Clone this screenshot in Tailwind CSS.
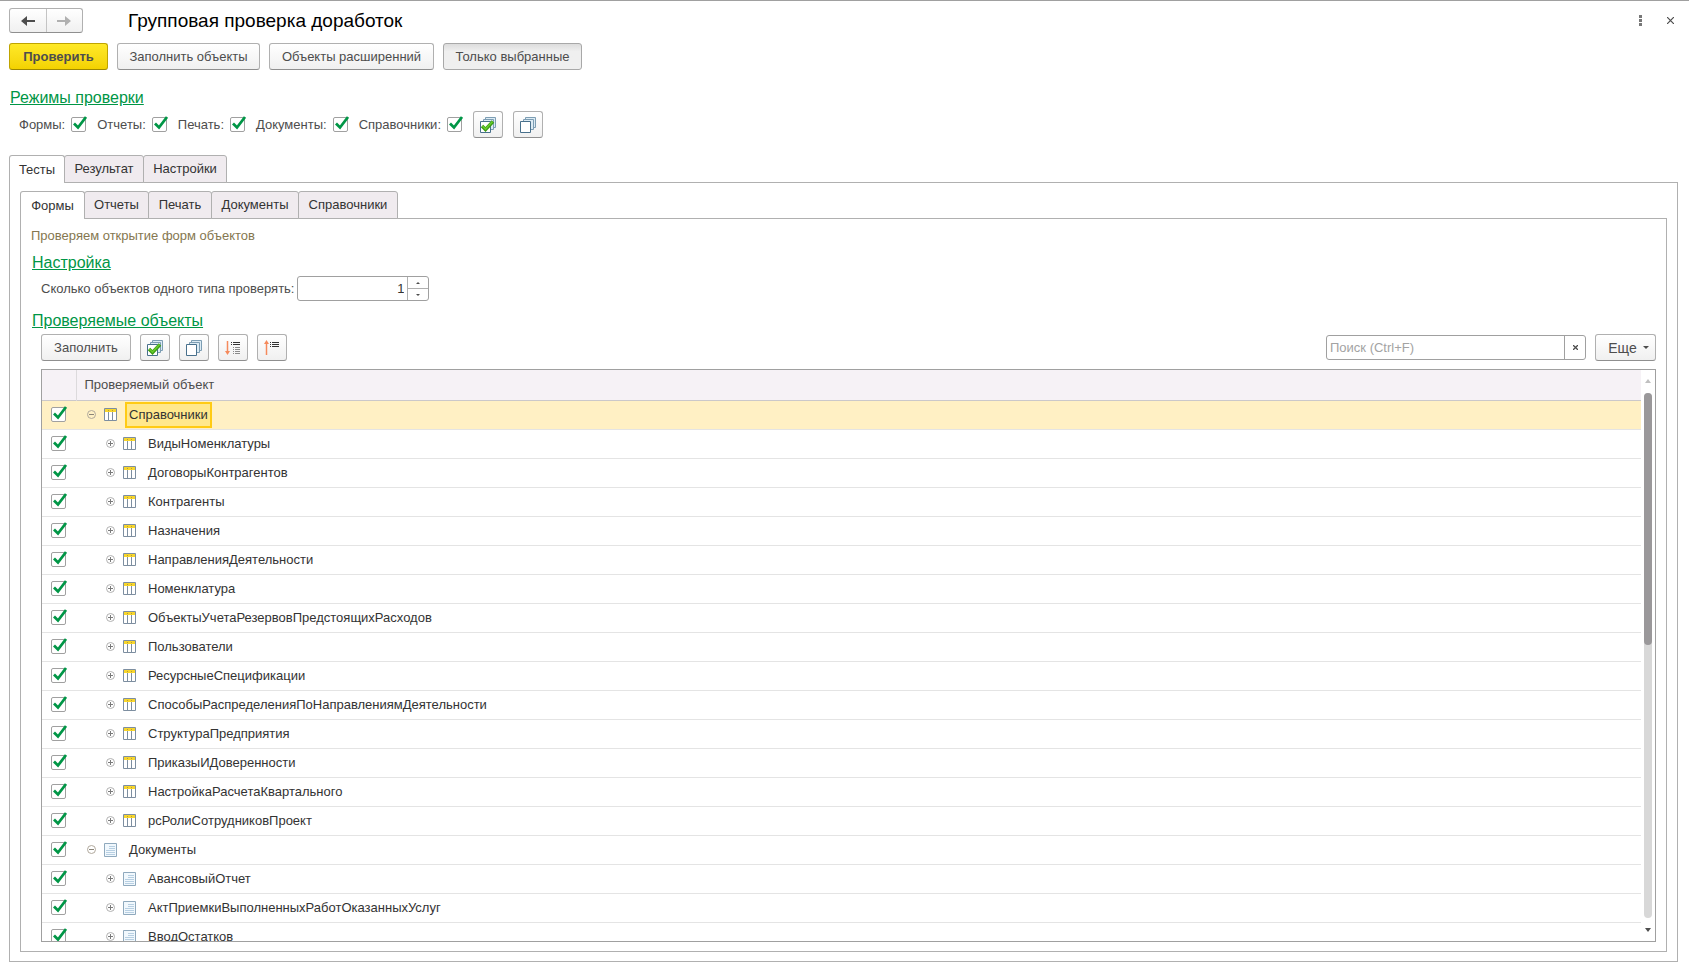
<!DOCTYPE html>
<html lang="ru">
<head>
<meta charset="utf-8">
<title>Групповая проверка доработок</title>
<script src="https://cdn.jsdelivr.net/npm/@tailwindcss/browser@4"></script>
</head>
<body class="flex h-screen flex-col overflow-hidden border-t border-[#a0a0a0] bg-white px-[9px] pb-[3px] font-['Liberation_Sans',Arial,sans-serif] text-[13px] leading-4 text-[#4d4d4d]">

<svg class="hidden" aria-hidden="true">
  <symbol id="tick" viewBox="0 0 17 16"><path d="M3 8.5 7 12.5 15 2" fill="none" stroke="#009646" stroke-width="2.8"/></symbol>
  <symbol id="stack" viewBox="0 0 16 16"><g stroke="#7c9db3" fill="#dcebf4"><path d="M5.500.500h10v10h-10z"/><path d="M3.500 2.500h10v10h-10z"/></g><path d="M.500 4.500h10v11h-10z" fill="#fff" stroke="#48708c"/></symbol>
  <symbol id="stack-on" viewBox="0 0 16 16"><g stroke="#7c9db3" fill="#dcebf4"><path d="M5.500.500h10v10h-10z"/><path d="M3.500 2.500h10v10h-10z"/></g><path d="M.500 4.500h10v11h-10z" fill="#fff" stroke="#48708c"/><path d="M2 9 5.500 12.500 13 4.500" fill="none" stroke="#3c9a14" stroke-width="3.400"/><path d="M2.500 9 5.500 12 12.500 4.500" fill="none" stroke="#66cc2a" stroke-width="1.600"/></symbol>
  <symbol id="plus" viewBox="0 0 9 9"><circle cx="4.500" cy="4.500" r="4" fill="#fff" stroke="#b0b0b0"/><path d="M2 4.500h5M4.500 2v5" stroke="#7a7a7a"/></symbol>
  <symbol id="minus" viewBox="0 0 9 9"><circle cx="4.500" cy="4.500" r="4" fill="none" stroke="#b0a89c"/><path d="M2 4.500h5" stroke="#8a8478"/></symbol>
  <symbol id="catalog" viewBox="0 0 13 13"><path d="M.500.500h12v12H.500z" fill="#fff" stroke="#7d8ea0"/><path d="M4.500 3v9M8.500 3v9" stroke="#7d8ea0"/><path d="M1 1h11v3H1z" fill="#f8d62c"/><path d="M4.500 2v1M8.500 2v1" stroke="#b09a40"/></symbol>
  <symbol id="doc" viewBox="0 0 13 14"><path d="M.500.500h12v13H.500z" fill="#f1f8fd" stroke="#8fa9bd"/><path d="M5 3.500h6M5 5.500h6M2 7.500h9M2 9.500h9M2 11.500h9" stroke="#b7cfe2"/></symbol>
</svg>

<header class="flex h-[37px] shrink-0 items-center pt-[2px]">
  <div class="flex h-[25px] w-[74px] rounded-[3px] border border-[#b0b0b0] border-b-[#8f8f8f] bg-linear-to-b from-white to-[#f0f0f0]">
    <button aria-label="Назад" class="grid flex-1 place-items-center border-r border-[#c4c4c4]"><svg class="h-[10px] w-[14px]" viewBox="0 0 14 10"><path d="M0 5 6 0v4h8v2H6v4z" fill="#4d4d4d"/></svg></button>
    <button aria-label="Вперед" class="grid flex-1 place-items-center"><svg class="h-[10px] w-[14px]" viewBox="0 0 14 10"><path d="M14 5 8 0v4H0v2h8v4z" fill="#b0b0b0"/></svg></button>
  </div>
  <h1 class="ml-[45px] text-[19px] leading-6 text-black">Групповая проверка доработок</h1>
  <div class="mr-[2px] ml-auto flex items-center gap-[14px]">
    <button aria-label="Меню" class="grid size-4 place-items-center"><svg class="h-[11px] w-[3px]" viewBox="0 0 3 11"><path d="M0 0h3v3H0zM0 4h3v3H0zM0 8h3v3H0z" fill="#777"/></svg></button>
    <button aria-label="Закрыть" class="grid size-4 place-items-center"><svg class="size-[7px]" viewBox="0 0 7 7"><path d="M0 0 7 7M7 0 0 7" stroke="#4d4d4d" stroke-width="1.2"/></svg></button>
  </div>
</header>

<div class="mt-[5px] flex h-[27px] shrink-0 gap-[9px]">
  <button class="w-[99px] rounded-[3px] border border-[#bfa400] border-b-[#9e8800] bg-linear-to-b from-[#ffe926] to-[#f3d200] font-bold">Проверить</button>
  <button class="w-[143px] rounded-[3px] border border-[#b0b0b0] border-b-[#8f8f8f] bg-linear-to-b from-white to-[#f0f0f0]">Заполнить объекты</button>
  <button class="w-[165px] rounded-[3px] border border-[#b0b0b0] border-b-[#8f8f8f] bg-linear-to-b from-white to-[#f0f0f0]">Объекты расширенний</button>
  <button aria-pressed="true" class="w-[139px] rounded-[3px] border border-[#a8a8a8] bg-linear-to-b from-[#dcdcdc] to-[#efefef] to-30%">Только выбранные</button>
</div>

<h2 class="mt-4 shrink-0 text-[16px] leading-6"><a href="#modes" class="ml-px text-[#009646] underline">Режимы проверки</a></h2>
<div id="modes" class="mt-px ml-[10px] flex h-[27px] shrink-0 items-center">
  <div class="flex items-center gap-[10px]" id="mode-list"></div>
  <button aria-label="Отметить все режимы" class="ml-[10px] grid h-[27px] w-[30px] place-items-center rounded-[3px] border border-[#b0b0b0] border-b-[#8f8f8f] bg-linear-to-b from-white to-[#f0f0f0]"><svg class="size-4"><use href="#stack-on"/></svg></button>
  <button aria-label="Снять отметки режимов" class="ml-[10px] grid h-[27px] w-[30px] place-items-center rounded-[3px] border border-[#b0b0b0] border-b-[#8f8f8f] bg-linear-to-b from-white to-[#f0f0f0]"><svg class="size-4"><use href="#stack"/></svg></button>
</div>

<div role="tablist" class="relative z-10 mt-[17px] -mb-px flex h-7 shrink-0 text-[#333]">
  <button role="tab" aria-selected="true" class="w-14 rounded-t-[3px] border border-b-0 border-[#b0b0b0] bg-white">Тесты</button>
  <button role="tab" class="-ml-px w-20 rounded-t-[3px] border border-[#b0b0b0] bg-[#f0ebef]">Результат</button>
  <button role="tab" class="-ml-px w-[84px] rounded-t-[3px] border border-[#b0b0b0] bg-[#f0ebef]">Настройки</button>
</div>
<main class="mr-[2px] flex min-h-0 flex-1 flex-col border border-[#b0b0b0] px-[10px] pt-2 pb-[9px]">
  <div role="tablist" class="relative z-10 -mb-px flex h-7 shrink-0 text-[#333]">
    <button role="tab" aria-selected="true" class="w-[65px] rounded-t-[3px] border border-b-0 border-[#b0b0b0] bg-white">Формы</button>
    <button role="tab" class="-ml-px w-[65px] rounded-t-[3px] border border-[#b0b0b0] bg-[#f0ebef]">Отчеты</button>
    <button role="tab" class="-ml-px w-16 rounded-t-[3px] border border-[#b0b0b0] bg-[#f0ebef]">Печать</button>
    <button role="tab" class="-ml-px w-[88px] rounded-t-[3px] border border-[#b0b0b0] bg-[#f0ebef]">Документы</button>
    <button role="tab" class="-ml-px w-[100px] rounded-t-[3px] border border-[#b0b0b0] bg-[#f0ebef]">Справочники</button>
  </div>
  <section class="flex min-h-0 flex-1 flex-col border border-[#b0b0b0] px-[10px] pt-[9px] pb-[9px]">
    <p class="shrink-0 text-[#857750]">Проверяем открытие форм объектов</p>
    <h2 class="mt-[7px] shrink-0 text-[16px] leading-6"><a href="#settings" class="ml-px text-[#009646] underline">Настройка</a></h2>
    <div id="settings" class="mt-[1px] ml-[10px] flex h-[25px] shrink-0 items-center">
      <label for="count">Сколько объектов одного типа проверять:</label>
      <div class="ml-[3px] flex h-[25px] w-[132px] overflow-hidden rounded-[3px] border border-[#a0a0a0]">
        <input id="count" type="text" value="1" class="min-w-0 flex-1 pr-[3px] text-right text-[#333] outline-none">
        <div class="flex w-[21px] flex-col border-l border-[#b0b0b0]">
          <button aria-label="Больше" class="grid flex-1 place-items-center border-b border-[#b0b0b0]"><svg class="h-[2px] w-[4px]" viewBox="0 0 4 2"><path d="M0 2 2 0 4 2z" fill="#4d4d4d"/></svg></button>
          <button aria-label="Меньше" class="grid flex-1 place-items-center"><svg class="h-[2px] w-[4px]" viewBox="0 0 4 2"><path d="M0 0 2 2 4 0z" fill="#4d4d4d"/></svg></button>
        </div>
      </div>
    </div>
    <h2 class="mt-2 shrink-0 text-[16px] leading-6"><a href="#objects" class="ml-px text-[#009646] underline">Проверяемые объекты</a></h2>
    <div class="mt-px ml-[10px] flex h-[27px] shrink-0 items-center gap-[9px]">
      <button class="h-full w-[90px] rounded-[3px] border border-[#b0b0b0] border-b-[#8f8f8f] bg-linear-to-b from-white to-[#f0f0f0]">Заполнить</button>
      <button aria-label="Отметить все" class="grid h-full w-[30px] place-items-center rounded-[3px] border border-[#b0b0b0] border-b-[#8f8f8f] bg-linear-to-b from-white to-[#f0f0f0]"><svg class="size-4"><use href="#stack-on"/></svg></button>
      <button aria-label="Снять отметки" class="grid h-full w-[30px] place-items-center rounded-[3px] border border-[#b0b0b0] border-b-[#8f8f8f] bg-linear-to-b from-white to-[#f0f0f0]"><svg class="size-4"><use href="#stack"/></svg></button>
      <button aria-label="Развернуть все" class="grid h-full w-[30px] place-items-center rounded-[3px] border border-[#b0b0b0] border-b-[#8f8f8f] bg-linear-to-b from-white to-[#f0f0f0]"><svg class="size-4" viewBox="0 0 16 16"><path d="M2.500 1v11" stroke="#f58a5c" stroke-width="1.500"/><path d="M0 11h5L2.500 15z" fill="#f58a5c"/><path d="M6 2.500h1M8 2.500h7M6 4.500h1M8 4.500h7" stroke="#333"/><path d="M8 7.500h1M10 7.500h5M8 9.500h1M10 9.500h5M8 11.500h1M10 11.500h5M8 13.500h1M10 13.500h5" stroke="#8a8a8a"/></svg></button>
      <button aria-label="Свернуть все" class="grid h-full w-[30px] place-items-center rounded-[3px] border border-[#b0b0b0] border-b-[#8f8f8f] bg-linear-to-b from-white to-[#f0f0f0]"><svg class="size-4" viewBox="0 0 16 16"><path d="M2.500 15V3" stroke="#f58a5c" stroke-width="1.500"/><path d="M0 4h5L2.500 0z" fill="#f58a5c"/><path d="M6 2.500h1M8 2.500h7M6 4.500h1M8 4.500h7M6 6.500h1M8 6.500h7" stroke="#333"/></svg></button>
      <div class="ml-auto flex h-[25px] w-[260px] overflow-hidden rounded-[3px] border border-[#a0a0a0]">
        <input type="text" aria-label="Поиск" placeholder="Поиск (Ctrl+F)" class="min-w-0 flex-1 pl-[3px] outline-none placeholder:text-[#a3a3a3]">
        <button aria-label="Очистить" class="grid w-[21px] place-items-center border-l border-[#a0a0a0]"><svg class="size-[5px]" viewBox="0 0 5 5"><path d="M0 0 5 5M5 0 0 5" stroke="#4d4d4d" stroke-width="1.3"/></svg></button>
      </div>
      <button class="flex h-full w-[61px] items-center justify-center gap-[6px] rounded-[3px] border border-[#b0b0b0] border-b-[#8f8f8f] bg-linear-to-b from-white to-[#f0f0f0] pl-[6px] text-[14px]">Еще<svg class="h-[3px] w-[6px]" viewBox="0 0 6 3"><path d="M0 0h6L3 3z" fill="#4d4d4d"/></svg></button>
    </div>
    <div id="objects" class="mt-2 ml-[10px] flex min-h-0 flex-1 overflow-hidden border border-[#a0a0a0]">
      <div class="min-w-0 flex-1 overflow-hidden">
        <table class="w-full table-fixed border-collapse text-[#333]">
          <thead>
            <tr class="h-[30px] border-b border-[#cbc8ca] bg-[#f6f2f6] text-left text-[#4d4d4d]">
              <th class="w-[34px] border-r border-[#dcdadc]" aria-label="Отметка"></th>
              <th class="pl-2 font-normal">Проверяемый объект</th>
            </tr>
          </thead>
          <tbody id="rows"></tbody>
        </table>
      </div>
      <div class="flex w-[14px] shrink-0 flex-col items-center pt-[9px] pb-[9px]">
        <svg class="h-[4px] w-[6px]" viewBox="0 0 6 4"><path d="M0 4h6L3 0z" fill="#c0c0c0"/></svg>
        <div class="mt-[10px] mb-[10px] w-2 flex-1 rounded-full bg-[#d8d8d8]"><div class="h-[48%] rounded-full bg-[#9a989a]"></div></div>
        <svg class="h-[4px] w-[6px]" viewBox="0 0 6 4"><path d="M0 0h6L3 4z" fill="#4d4d4d"/></svg>
      </div>
    </div>
  </section>
</main>

<script>
const check = (id, label) => `<span class="relative block size-[15px]"><input type="checkbox" checked id="${id}" ${label ? `aria-label="${label}"` : ''} class="block size-[15px] appearance-none rounded-[2px] border border-[#a0a0a0] bg-white"><svg class="pointer-events-none absolute -top-[2px] left-0 h-4 w-[17px]"><use href="#tick"/></svg></span>`;
document.getElementById('mode-list').innerHTML = ['Формы', 'Отчеты', 'Печать', 'Документы', 'Справочники']
  .map((m, i) => `<div class="flex items-center gap-[6px]"><label for="mode${i}">${m}:</label><span class="mr-px">${check('mode' + i, '')}</span></div>`).join('');
const rows = [
  [0, 'catalog', 'Справочники'],
  ...['ВидыНоменклатуры', 'ДоговорыКонтрагентов', 'Контрагенты', 'Назначения', 'НаправленияДеятельности', 'Номенклатура', 'ОбъектыУчетаРезервовПредстоящихРасходов', 'Пользователи', 'РесурсныеСпецификации', 'СпособыРаспределенияПоНаправлениямДеятельности', 'СтруктураПредприятия', 'ПриказыИДоверенности', 'НастройкаРасчетаКвартального', 'рсРолиСотрудниковПроект'].map(n => [1, 'catalog', n]),
  [0, 'doc', 'Документы'],
  ...['АвансовыйОтчет', 'АктПриемкиВыполненныхРаботОказанныхУслуг', 'ВводОстатков'].map(n => [1, 'doc', n]),
];
document.getElementById('rows').innerHTML = rows.map(([level, icon, name], i) => `
  <tr class="h-[29px] border-b border-[#e4e4e4] ${i ? '' : 'bg-[#fff0c4]'}">
    <td class="pl-[9px]">${check('row' + i, name)}</td>
    <td><div class="flex items-center ${level ? 'pl-[30px]' : 'pl-[11px]'}">
      <button aria-label="${level ? 'Развернуть' : 'Свернуть'}" class="block"><svg class="block size-[9px]"><use href="${level ? '#plus' : '#minus'}"/></svg></button>
      <svg class="ml-2 w-[13px] ${icon === 'doc' ? 'h-[14px]' : 'h-[13px]'}"><use href="#${icon}"/></svg>
      <span class="ml-2 border-2 px-[2px] leading-[22px] ${i ? 'border-transparent' : 'border-[#ffcb14] bg-[#ffe88c]'}">${name}</span>
    </div></td>
  </tr>`).join('');
</script>
</body>
</html>
